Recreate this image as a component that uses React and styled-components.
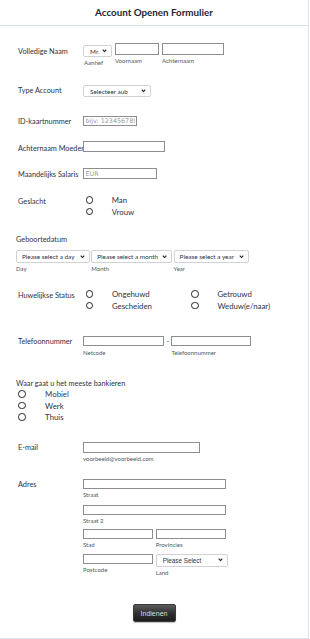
import React from 'react';
import styled, { createGlobalStyle } from 'styled-components';

const Global = createGlobalStyle`
  html, body { margin: 0; padding: 0; background: #fff; }
  body { font-family: Lato, "Noto Sans", sans-serif; color: #2c3345; }
  * { box-sizing: border-box; }
`;

const Page = styled.div`
  width: 309px;
  height: 639px;
  border-right: 1px solid #dce3eb;
  border-bottom: 1px solid #dce3eb;
  display: flex;
  flex-direction: column;
`;

const Header = styled.div`
  height: 26px;
  border-bottom: 1px solid #d8dfe7;
  display: flex;
  align-items: center;
  justify-content: center;
`;

const Title = styled.h1`
  margin: 0;
  font-size: 9.8px;
  font-weight: 700;
  color: #1f2533;
  line-height: 1;
`;

const Body = styled.div`
  padding-top: 18px;
  display: flex;
  flex-direction: column;
`;

const Row = styled.div`
  display: flex;
  flex-direction: ${p => (p.$column ? 'column' : 'row')};
  align-items: flex-start;
  height: ${p => p.$h}px;
  padding-left: ${p => p.$pl ?? 18}px;
`;

const Label = styled.div`
  width: ${p => (p.$auto ? 'auto' : '65px')};
  flex: none;
  font-size: 7.3px;
  line-height: 9px;
  padding-top: ${p => p.$pt ?? 0}px;
  color: #2c3345;
  white-space: nowrap;
`;

const Fields = styled.div`
  display: flex;
  flex-direction: ${p => (p.$column ? 'column' : 'row')};
  align-items: flex-start;
  gap: ${p => p.$gap ?? 0}px;
  margin-top: ${p => p.$mt ?? 0}px;
`;

const Field = styled.div`
  display: flex;
  flex-direction: column;
  margin-top: ${p => p.$mt ?? 0}px;
`;

const Sub = styled.span`
  font-size: 6px;
  line-height: 7px;
  color: #4f5666;
  margin-top: ${p => p.$mt ?? 1.5}px;
  padding-left: ${p => p.$pl ?? 0}px;
  white-space: nowrap;
`;

const Input = styled.input`
  display: block;
  width: ${p => p.$w}px;
  height: ${p => p.$h ?? 10}px;
  margin: 0;
  padding: 0 1.5px;
  border: 1px solid #8d8d8d;
  border-radius: 0;
  background: #fff;
  font-family: "DejaVu Sans", Verdana, sans-serif;
  font-size: 6.4px;
  color: #333;
  outline: none;
  &::placeholder { color: #9a9a9a; }
`;

const SelectBox = styled.div`
  display: flex;
  align-items: center;
  justify-content: space-between;
  width: ${p => p.$w}px;
  height: ${p => p.$h ?? 13}px;
  padding: 0 4px 0 ${p => p.$pl ?? 6}px;
  border: 1px solid #cfd2d6;
  border-radius: 2px;
  background: #fff;
  font-family: ${p => (p.$alt ? '"Liberation Sans", Arial, sans-serif' : 'Lato, "Noto Sans", sans-serif')};
  font-size: ${p => (p.$alt ? '6.3px' : '6.4px')};
  color: #2c3345;
  white-space: nowrap;
  overflow: hidden;
`;

const Chevron = () => (
  <svg width="5" height="3.5" viewBox="0 0 8 6" style={{ flex: 'none' }}>
    <path d="M1 1.2 L4 4.4 L7 1.2" stroke="#2a2a2a" strokeWidth="1.9" fill="none" />
  </svg>
);

const Select = ({ children, ...rest }) => (
  <SelectBox {...rest}>
    <span>{children}</span>
    <Chevron />
  </SelectBox>
);

const RadioGroup = styled.div`
  display: ${p => (p.$cols ? 'grid' : 'flex')};
  grid-template-columns: ${p => (p.$cols ? `${p.$cols}px auto` : 'none')};
  flex-direction: column;
  padding-left: ${p => p.$pl ?? 0}px;
`;

const Option = styled.label`
  display: flex;
  align-items: center;
  height: 11.7px;
  gap: ${p => p.$gap ?? 18.5}px;
  font-size: 7.8px;
  color: ${p => (p.$active ? '#1f3a6b' : '#2c3345')};
  white-space: nowrap;
`;

const Radio = styled.span`
  width: 7.6px;
  height: 7.6px;
  border: 1.4px solid #222;
  border-radius: 50%;
  flex: none;
`;

const Dash = styled.span`
  width: 7.4px;
  text-align: center;
  font-size: 7px;
  line-height: 10px;
`;

const ButtonRow = styled.div`
  display: flex;
  justify-content: center;
`;

const Button = styled.button`
  width: 43px;
  height: 18px;
  padding: 0;
  border: 1px solid #3a3a3a;
  border-radius: 2px;
  background: linear-gradient(#5b5b5b, #2e2e2e 55%, #1e1e1e);
  color: #dcdcdc;
  font-family: "Liberation Sans", Arial, sans-serif;
  font-size: 7px;
  box-shadow: 0 1px 1px rgba(0,0,0,0.25);
`;

export default function App() {
  return (
    <>
      <Global />
      <Page>
        <Header>
          <Title>Account Openen Formulier</Title>
        </Header>
        <Body>
          <Row $h={41}>
            <Label $pt={3}>Volledige Naam</Label>
            <Fields $gap={3}>
              <Field $mt={1}>
                <Select $w={29} $h={12} $pl={6}>Mr.</Select>
                <Sub $mt={2} $pl={1}>Aanhef</Sub>
              </Field>
              <Field $mt={-0.7}>
                <Input $w={44} $h={12} />
                <Sub $mt={2}>Voornaam</Sub>
              </Field>
              <Field $mt={-0.7}>
                <Input $w={62} $h={12} />
                <Sub $mt={2}>Achternaam</Sub>
              </Field>
            </Fields>
          </Row>

          <Row $h={31}>
            <Label $pt={1}>Type Account</Label>
            <Select $w={68} $h={12}>Selecteer aub</Select>
          </Row>

          <Row $h={25}>
            <Label $pt={0.5}>ID-kaartnummer</Label>
            <Input $w={54} $h={9.5} placeholder="bijv: 1234567890" />
          </Row>

          <Row $h={27}>
            <Label $pt={3}>Achternaam Moeder</Label>
            <Input $w={82} $h={11} />
          </Row>

          <Row $h={26}>
            <Label $pt={2}>Maandelijks Salaris</Label>
            <Input $w={74} $h={11} placeholder="EUR" />
          </Row>

          <Row $h={41}>
            <Label $pt={3}>Geslacht</Label>
            <RadioGroup $pl={2.6}>
              <Option><Radio />Man</Option>
              <Option><Radio />Vrouw</Option>
            </RadioGroup>
          </Row>

          <Row $h={53} $column $pl={16}>
            <Label $auto>Geboortedatum</Label>
            <Fields $gap={1.3} $mt={6}>
              <Field>
                <Select $w={74} $pl={5}>Please select a day</Select>
                <Sub $mt={2}>Day</Sub>
              </Field>
              <Field>
                <Select $w={81} $pl={5}>Please select a month</Select>
                <Sub $mt={2}>Month</Sub>
              </Field>
              <Field>
                <Select $w={75} $pl={5}>Please select a year</Select>
                <Sub $mt={2}>Year</Sub>
              </Field>
            </Fields>
          </Row>

          <Row $h={48}>
            <Label $pt={3}>Huwelijkse Status</Label>
            <RadioGroup $cols={105.5} $pl={2.8}>
              <Option><Radio />Ongehuwd</Option>
              <Option><Radio />Getrouwd</Option>
              <Option><Radio />Gescheiden</Option>
              <Option><Radio />Weduw(e/naar)</Option>
            </RadioGroup>
          </Row>

          <Row $h={43}>
            <Label $pt={1}>Telefoonnummer</Label>
            <Fields>
              <Field>
                <Input $w={81} $h={10} />
                <Sub $mt={3}>Netcode</Sub>
              </Field>
              <Dash>-</Dash>
              <Field>
                <Input $w={80} $h={10} />
                <Sub $mt={3}>Telefoonnummer</Sub>
              </Field>
            </Fields>
          </Row>

          <Row $h={63} $column $pl={16}>
            <Label $auto>Waar gaat u het meeste bankieren</Label>
            <RadioGroup $pl={2}>
              <Option $gap={19.5} $active><Radio />Mobiel</Option>
              <Option $gap={19.5}><Radio />Werk</Option>
              <Option $gap={19.5}><Radio />Thuis</Option>
            </RadioGroup>
          </Row>

          <Row $h={37}>
            <Label $pt={1}>E-mail</Label>
            <Field>
              <Input $w={117} $h={11} />
              <Sub $mt={2}>voorbeeld@voorbeeld.com</Sub>
            </Field>
          </Row>

          <Row $h={125}>
            <Label $pt={0.5}>Adres</Label>
            <Fields $column>
              <Field>
                <Input $w={143} $h={10} />
                <Sub>Straat</Sub>
              </Field>
              <Field $mt={7.5}>
                <Input $w={143} $h={10} />
                <Sub>Straat 2</Sub>
              </Field>
              <Fields $gap={2.7} $mt={5.8}>
                <Field>
                  <Input $w={70} $h={10} />
                  <Sub>Stad</Sub>
                </Field>
                <Field>
                  <Input $w={70.7} $h={10} />
                  <Sub>Provincies</Sub>
                </Field>
              </Fields>
              <Fields $gap={2.7} $mt={5.8}>
                <Field>
                  <Input $w={70} $h={10.7} />
                  <Sub>Postcode</Sub>
                </Field>
                <Field>
                  <Select $w={72.7} $h={13.3} $alt>Please Select</Select>
                  <Sub $mt={2}>Land</Sub>
                </Field>
              </Fields>
            </Fields>
          </Row>

          <ButtonRow>
            <Button>Indienen</Button>
          </ButtonRow>
        </Body>
      </Page>
    </>
  );
}
